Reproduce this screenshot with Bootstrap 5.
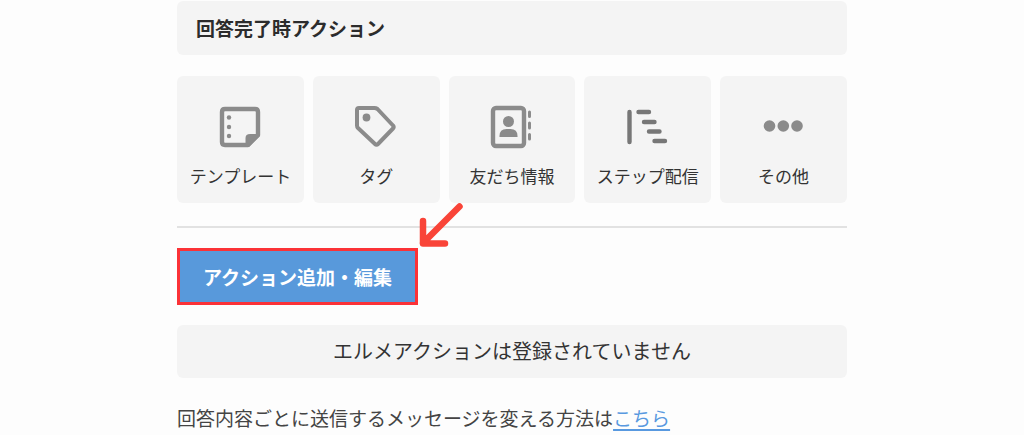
<!DOCTYPE html>
<html lang="ja">
<head>
<meta charset="utf-8">
<meta name="viewport" content="width=device-width, initial-scale=1">
<title>回答完了時アクション</title>
<link href="https://cdn.jsdelivr.net/npm/bootstrap@5.3.0/dist/css/bootstrap.min.css" rel="stylesheet">
<style>
  body { background: #fdfdfd; color: #333; font-family: "Noto Sans CJK JP", sans-serif; font-size: 19px; line-height: 28px; }
  .page-col { max-width: 670px; padding-top: 1px; }
  .panel { background: #f4f4f4; border-radius: 6px; }
  .panel-bar { padding: 13px 19px; }
  .panel-title { font-size: 19px; line-height: 28px; color: #2c2c2c; }
  .tile-list { gap: 9px; margin-top: 21px; }
  .tile { flex: 1 1 0; min-width: 120px; padding: 26px 4px 15px; font-size: 17px; line-height: 24px; }
  .tile svg { width: 48px; height: 48px; margin-bottom: 14px; color: #8b8b8b; }
  .rule { margin: 23px 0 20px; border-top: 2px solid #e2e2e2; opacity: 1; }
  .btn-action { background: #5899db; color: #fff; border: 3px solid #fb3237; border-radius: 0; font-size: 19px; font-weight: 700; line-height: 28px; padding: 12px 23px 11px; }
  .btn-action:hover { background: #4588cc; color: #fff; border-color: #fb3237; }
  .pointer-arrow { left: 100%; bottom: 100%; width: 48px; height: 48px; }
  .notice { font-size: 20px; margin-top: 20px; padding: 12px 19px 13px; }
  .help { margin-top: 26px; color: #444; }
  .help a { color: #5899e0; text-decoration-thickness: 2px; text-underline-offset: 3px; }
</style>
</head>
<body>
<main class="page-col container-fluid px-0">
  <div class="panel panel-bar"><h1 class="panel-title fw-bold mb-0">回答完了時アクション</h1></div>

  <ul class="tile-list list-unstyled d-flex flex-wrap mb-0">
    <li class="tile panel d-flex flex-column align-items-center text-nowrap">
      <svg viewBox="0 0 48 48" fill="none" stroke="currentColor" stroke-width="4.400" stroke-linejoin="round" aria-hidden="true">
        <path d="M9 7H39Q42 7 42 10V33L32 43H9Q6 43 6 40V10Q6 7 9 7Z"/>
        <path d="M43 32H34Q29.500 32 29.500 36V45H33L44 34Z" fill="currentColor" stroke="none"/>
        <g fill="currentColor" stroke="none"><circle cx="13" cy="15.500" r="2.200"/><circle cx="13" cy="25" r="2.200"/><circle cx="13" cy="34" r="2.200"/></g>
      </svg>
      <span>テンプレート</span>
    </li>
    <li class="tile panel d-flex flex-column align-items-center text-nowrap">
      <svg viewBox="0 0 48 48" fill="none" stroke="currentColor" stroke-width="4" stroke-linejoin="round" aria-hidden="true">
        <path d="M7 6H22.500Q24 6 25.500 7L41 23.500Q42.500 25 41 26.500L26 42Q24.500 43.500 23 42L6 26Q5 25 5 23.500V8Q5 6 7 6Z"/>
        <circle cx="14.500" cy="15.500" r="3.900" fill="currentColor" stroke="none"/>
      </svg>
      <span>タグ</span>
    </li>
    <li class="tile panel d-flex flex-column align-items-center text-nowrap">
      <svg viewBox="0 0 48 48" fill="none" stroke="currentColor" stroke-width="4.400" stroke-linecap="round" aria-hidden="true">
        <rect x="5" y="6" width="31" height="38" rx="3"/>
        <circle cx="20.500" cy="19.500" r="5.500" fill="currentColor" stroke="none"/>
        <path d="M11.500 35Q11 27 18.500 27H22.500Q30 27 29.500 35Z" fill="currentColor" stroke="none"/>
        <path d="M41.500 10V14.500M41.500 21V26M41.500 32.500V37" stroke-width="3"/>
      </svg>
      <span>友だち情報</span>
    </li>
    <li class="tile panel d-flex flex-column align-items-center text-nowrap">
      <svg viewBox="0 0 48 48" fill="none" stroke="#777" stroke-width="4.400" stroke-linecap="round" aria-hidden="true">
        <path d="M5.500 10V40M14.500 10H25M20 20H30.500M25 29.500H35.500M30.500 39H41"/>
      </svg>
      <span>ステップ配信</span>
    </li>
    <li class="tile panel d-flex flex-column align-items-center text-nowrap">
      <svg viewBox="0 0 48 48" fill="currentColor" aria-hidden="true">
        <circle cx="9.500" cy="24" r="5.800"/><circle cx="23.300" cy="24" r="5.800"/><circle cx="37" cy="24" r="5.800"/>
      </svg>
      <span>その他</span>
    </li>
  </ul>

  <hr class="rule">

  <div class="d-flex">
    <div class="position-relative">
      <button type="button" class="btn btn-action">アクション追加・編集</button>
      <svg class="pointer-arrow position-absolute" viewBox="0 0 48 48" fill="none" stroke="#f94438" stroke-width="6.500" stroke-linecap="round" stroke-linejoin="round" aria-hidden="true">
        <path d="M41.500 6.500L5 43M5 21V43.500H27"/>
      </svg>
    </div>
  </div>

  <div class="panel notice text-center">エルメアクションは登録されていません</div>

  <p class="help mb-0">回答内容ごとに送信するメッセージを変える方法は<a href="#">こちら</a></p>
</main>
<script src="https://cdn.jsdelivr.net/npm/bootstrap@5.3.0/dist/js/bootstrap.bundle.min.js"></script>
</body>
</html>
